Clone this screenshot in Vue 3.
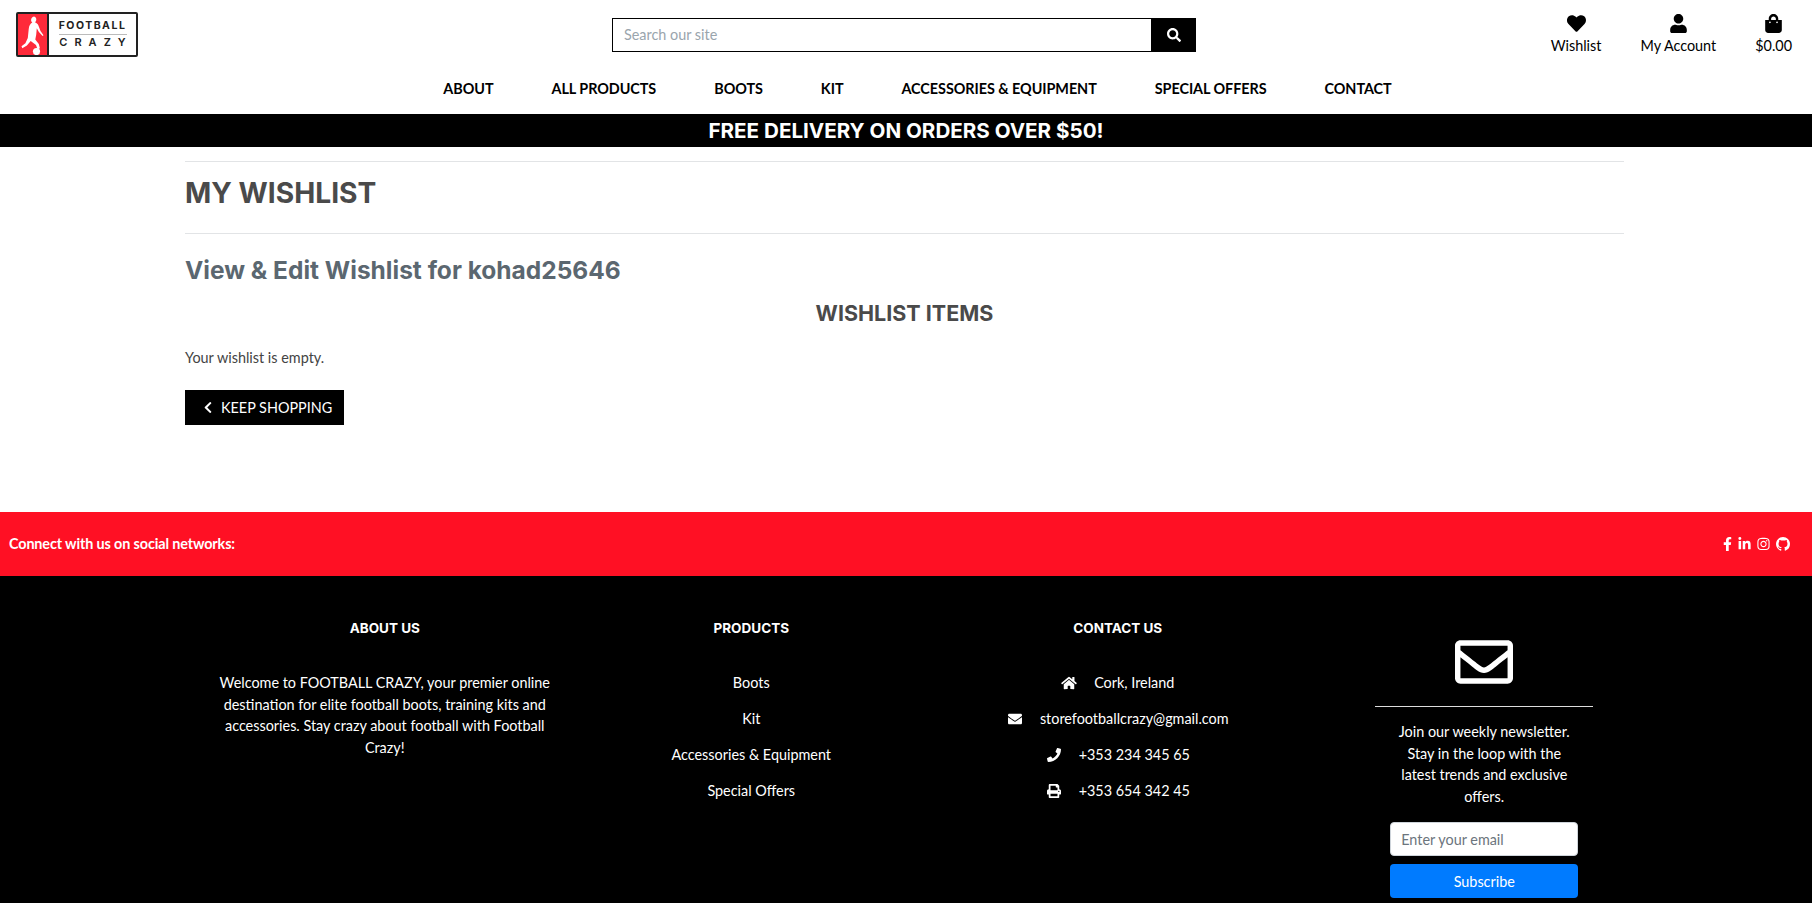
<template>
  <div class="page">
    <header class="site-header">
      <div class="top-row">
        <a class="logo" href="#">
          <span class="logo-mark">
            <svg viewBox="0 0 31 44" width="31" height="44">
              <path fill="#fff" d="M17.5 3.5c1.8 0 3 1.4 2.8 3.2-.1 1.2-.7 2.1-1.5 2.6 1.6.6 2.9 1.6 3.6 3.2l2.1 5.5 3 4.2-.9.7-3.7-3.9-2.1-3.7-.6 6.5-.9 4.8 3.5 4.4 1.1 4.3-2.3 1.2-1.6-4.4-5.3-4.2-3.8 4.6-4.6 2.7-.8-2 3.9-3 2.4-5.3.9-8.7c.3-3.3 1.6-5.6 3.6-6.6-.9-.7-1.3-1.8-1.2-2.9.2-1.8 1.4-3.2 3.4-3.2z"/>
              <circle cx="20.5" cy="38.5" r="3.6" fill="#fff"/>
            </svg>
          </span>
          <span class="logo-text">
            <span class="logo-top">FOOTBALL</span>
            <span class="logo-bottom">CRAZY</span>
          </span>
        </a>
        <form class="search" @submit.prevent>
          <input class="search-input" type="text" placeholder="Search our site" />
          <button class="search-btn" type="submit" aria-label="Search">
            <svg class="icon" viewBox="0 0 512 512" width="14" height="14"><path :d="paths.search" /></svg>
          </button>
        </form>
        <div class="account-links">
          <a v-for="link in accountLinks" :key="link.label" class="account-link" href="#">
            <svg class="icon" :viewBox="link.box" height="19" width="21"><path :d="link.d" /></svg>
            <span>{{ link.label }}</span>
          </a>
        </div>
      </div>
      <nav class="main-nav">
        <a v-for="item in navItems" :key="item" href="#">{{ item }}</a>
      </nav>
    </header>

    <div class="banner">FREE DELIVERY ON ORDERS OVER $50!</div>

    <main class="content">
      <hr class="rule" />
      <h1 class="page-title">MY WISHLIST</h1>
      <hr class="rule" />
      <h2 class="sub-title">View &amp; Edit Wishlist for kohad25646</h2>
      <h3 class="items-title">WISHLIST ITEMS</h3>
      <p class="empty-text">Your wishlist is empty.</p>
      <a class="keep-btn" href="#">
        <svg class="icon" viewBox="0 0 320 512" width="10" height="13"><path :d="paths.chevron" /></svg>
        <span>KEEP SHOPPING</span>
      </a>
    </main>

    <section class="social-bar">
      <span>Connect with us on social networks:</span>
      <div class="social-icons">
        <svg v-for="s in socials" :key="s.name" class="icon" :viewBox="s.box" :width="s.w" height="14"><path :d="s.d" /></svg>
      </div>
    </section>

    <footer class="site-footer">
      <div class="footer-col">
        <h4>ABOUT US</h4>
        <p class="about">Welcome to FOOTBALL CRAZY, your premier online destination for elite football boots, training kits and accessories. Stay crazy about football with Football Crazy!</p>
      </div>
      <div class="footer-col">
        <h4>PRODUCTS</h4>
        <ul>
          <li v-for="p in products" :key="p"><a href="#">{{ p }}</a></li>
        </ul>
      </div>
      <div class="footer-col">
        <h4>CONTACT US</h4>
        <ul>
          <li v-for="c in contacts" :key="c.text" class="contact-row">
            <svg class="icon" :viewBox="c.box" width="16" height="14"><path :d="c.d" /></svg>
            <span>{{ c.text }}</span>
          </li>
        </ul>
      </div>
      <div class="footer-col newsletter">
        <svg class="icon mail" viewBox="0 0 512 512" width="58" height="58"><path :d="paths.envelopeOutline" /></svg>
        <hr />
        <p>Join our weekly newsletter. Stay in the loop with the latest trends and exclusive offers.</p>
        <input type="email" placeholder="Enter your email" />
        <button type="button">Subscribe</button>
      </div>
    </footer>
  </div>
</template>

<script setup>
const paths = {
  search: 'M505 442.7L405.3 343c-4.5-4.5-10.6-7-17-7H372c27.6-35.3 44-79.7 44-128C416 93.1 322.9 0 208 0S0 93.1 0 208s93.1 208 208 208c48.3 0 92.7-16.4 128-44v16.3c0 6.4 2.5 12.5 7 17l99.7 99.7c9.4 9.4 24.6 9.4 33.9 0l28.3-28.3c9.4-9.4 9.4-24.6.1-34zM208 336c-70.7 0-128-57.2-128-128 0-70.7 57.2-128 128-128 70.7 0 128 57.2 128 128 0 70.7-57.2 128-128 128z',
  chevron: 'M34.52 239.03L228.87 44.69c9.37-9.37 24.57-9.37 33.94 0l22.67 22.67c9.36 9.36 9.37 24.52.04 33.9L131.49 256l154.02 154.75c9.34 9.38 9.32 24.54-.04 33.9l-22.67 22.67c-9.37 9.37-24.57 9.37-33.94 0L34.52 272.97c-9.37-9.37-9.37-24.57 0-33.94z',
  envelopeOutline: 'M464 64H48C21.49 64 0 85.49 0 112v288c0 26.51 21.49 48 48 48h416c26.51 0 48-21.49 48-48V112c0-26.51-21.49-48-48-48zm0 48v40.805c-22.422 18.259-58.168 46.651-134.587 106.49-16.841 13.247-50.201 45.072-73.413 44.701-23.208.375-56.579-31.459-73.413-44.701C106.18 199.465 70.425 171.067 48 152.805V112h416zM48 400V214.398c22.914 18.251 55.409 43.862 104.938 82.646 21.857 17.205 60.134 55.186 103.062 54.955 42.717.231 80.509-37.199 103.053-54.947 49.528-38.783 82.032-64.401 104.947-82.653V400H48z'
}

const accountLinks = [
  { label: 'Wishlist', box: '0 0 512 512', d: 'M462.3 62.6C407.5 15.9 326 24.3 275.7 76.2L256 96.5l-19.7-20.3C186.1 24.3 104.5 15.9 49.7 62.6c-62.8 53.6-66.1 149.8-9.9 207.9l193.5 199.8c12.5 12.9 32.8 12.9 45.3 0l193.5-199.8c56.3-58.1 53-154.3-9.8-207.9z' },
  { label: 'My Account', box: '0 0 448 512', d: 'M224 256c70.7 0 128-57.3 128-128S294.7 0 224 0 96 57.3 96 128s57.3 128 128 128zm89.6 32h-16.7c-22.2 10.2-46.9 16-72.9 16s-50.6-5.8-72.9-16h-16.7C60.2 288 0 348.2 0 422.4V464c0 26.5 21.5 48 48 48h352c26.5 0 48-21.5 48-48v-41.6c0-74.2-60.2-134.4-134.4-134.4z' },
  { label: '$0.00', box: '0 0 448 512', d: 'M352 160v-32C352 57.42 294.579 0 224 0 153.42 0 96 57.42 96 128v32H0v272c0 44.183 35.817 80 80 80h288c44.183 0 80-35.817 80-80V160h-96zm-192-32c0-35.29 28.71-64 64-64s64 28.71 64 64v32H160v-32zm160 120c-13.255 0-24-10.745-24-24s10.745-24 24-24 24 10.745 24 24-10.745 24-24 24zm-192 0c-13.255 0-24-10.745-24-24s10.745-24 24-24 24 10.745 24 24-10.745 24-24 24z' }
]

const navItems = ['ABOUT', 'ALL PRODUCTS', 'BOOTS', 'KIT', 'ACCESSORIES & EQUIPMENT', 'SPECIAL OFFERS', 'CONTACT']

const socials = [
  { name: 'facebook', box: '0 0 320 512', w: 9, d: 'M279.14 288l14.22-92.66h-88.91v-60.13c0-25.35 12.42-50.06 52.24-50.06h40.42V6.26S260.43 0 225.36 0c-73.22 0-121.08 44.38-121.08 124.72v70.62H22.89V288h81.39v224h100.17V288z' },
  { name: 'linkedin', box: '0 0 448 512', w: 13, d: 'M100.28 448H7.4V148.9h92.88zM53.79 108.1C24.09 108.1 0 83.5 0 53.8a53.79 53.79 0 0 1 107.58 0c0 29.7-24.1 54.3-53.79 54.3zM447.9 448h-92.68V302.4c0-34.7-.7-79.2-48.29-79.2-48.29 0-55.69 37.7-55.69 76.7V448h-92.78V148.9h89.08v40.8h1.3c12.4-23.5 42.69-48.3 87.88-48.3 94 0 111.28 61.9 111.28 142.3V448z' },
  { name: 'instagram', box: '0 0 448 512', w: 13, d: 'M224.1 141c-63.6 0-114.9 51.3-114.9 114.9s51.3 114.9 114.9 114.9S339 319.5 339 255.9 287.7 141 224.1 141zm0 189.6c-41.1 0-74.7-33.5-74.7-74.7s33.5-74.7 74.7-74.7 74.7 33.5 74.7 74.7-33.6 74.7-74.7 74.7zm146.4-194.3c0 14.9-12 26.8-26.8 26.8-14.9 0-26.8-12-26.8-26.8s12-26.8 26.8-26.8 26.8 12 26.8 26.8zm76.1 27.2c-1.7-35.9-9.9-67.7-36.2-93.9-26.2-26.2-58-34.4-93.9-36.2-37-2.1-147.9-2.1-184.9 0-35.8 1.7-67.6 9.9-93.9 36.1s-34.4 58-36.2 93.9c-2.1 37-2.1 147.9 0 184.9 1.7 35.9 9.9 67.7 36.2 93.9s58 34.4 93.9 36.2c37 2.1 147.9 2.1 184.9 0 35.9-1.7 67.7-9.9 93.9-36.2 26.2-26.2 34.4-58 36.2-93.9 2.1-37 2.1-147.8 0-184.8zM398.8 388c-7.8 19.6-22.9 34.7-42.6 42.6-29.5 11.7-99.5 9-132.1 9s-102.7 2.6-132.1-9c-19.6-7.8-34.7-22.9-42.6-42.6-11.7-29.5-9-99.5-9-132.1s-2.6-102.7 9-132.1c7.8-19.6 22.9-34.7 42.6-42.6 29.5-11.7 99.5-9 132.1-9s102.7-2.6 132.1 9c19.6 7.8 34.7 22.9 42.6 42.6 11.7 29.5 9 99.5 9 132.1s2.7 102.7-9 132.1z' },
  { name: 'github', box: '0 0 16 16', w: 14, d: 'M8 0C3.58 0 0 3.58 0 8c0 3.54 2.29 6.53 5.47 7.59.4.07.55-.17.55-.38 0-.19-.01-.82-.01-1.49-2.01.37-2.53-.49-2.69-.94-.09-.23-.48-.94-.82-1.13-.28-.15-.68-.52-.01-.53.63-.01 1.08.58 1.23.82.72 1.21 1.87.87 2.33.66.07-.52.28-.87.51-1.07-1.78-.2-3.64-.89-3.64-3.95 0-.87.31-1.59.82-2.15-.08-.2-.36-1.02.08-2.12 0 0 .67-.21 2.2.82.64-.18 1.32-.27 2-.27.68 0 1.36.09 2 .27 1.53-1.04 2.2-.82 2.2-.82.44 1.1.16 1.92.08 2.12.51.56.82 1.27.82 2.15 0 3.07-1.87 3.75-3.65 3.95.29.25.54.73.54 1.48 0 1.07-.01 1.93-.01 2.2 0 .21.15.46.55.38A8.013 8.013 0 0016 8c0-4.42-3.58-8-8-8z' }
]

const products = ['Boots', 'Kit', 'Accessories & Equipment', 'Special Offers']

const contacts = [
  { text: 'Cork, Ireland', box: '0 0 576 512', d: 'M280.37 148.26L96 300.11V464a16 16 0 0 0 16 16l112.06-.29a16 16 0 0 0 15.92-16V368a16 16 0 0 1 16-16h64a16 16 0 0 1 16 16v95.64a16 16 0 0 0 16 16.05L464 480a16 16 0 0 0 16-16V300L295.67 148.26a12.19 12.19 0 0 0-15.3 0zM571.6 251.47L488 182.56V44.05a12 12 0 0 0-12-12h-56a12 12 0 0 0-12 12v72.61L318.47 43a48 48 0 0 0-61 0L4.34 251.47a12 12 0 0 0-1.6 16.9l25.5 31A12 12 0 0 0 45.15 301l235.22-193.74a12.19 12.19 0 0 1 15.3 0L530.9 301a12 12 0 0 0 16.9-1.6l25.5-31a12 12 0 0 0-1.7-16.93z' },
  { text: 'storefootballcrazy@gmail.com', box: '0 0 512 512', d: 'M502.3 190.8c3.9-3.1 9.7-.2 9.7 4.7V400c0 26.5-21.5 48-48 48H48c-26.5 0-48-21.5-48-48V195.6c0-5 5.7-7.8 9.7-4.7 22.4 17.4 52.1 39.5 154.1 113.6 21.1 15.4 56.7 47.8 92.2 47.6 35.7.3 72-32.8 92.3-47.6 102-74.1 131.6-96.3 154-113.7zM256 320c23.2.4 56.6-29.2 73.4-41.4 132.7-96.3 142.8-104.7 173.4-128.7 5.8-4.5 9.2-11.5 9.2-18.9v-19c0-26.5-21.5-48-48-48H48C21.5 64 0 85.5 0 112v19c0 7.4 3.4 14.3 9.2 18.9 30.6 23.9 40.7 32.4 173.4 128.7 16.8 12.2 50.2 41.8 73.4 41.4z' },
  { text: '+353 234 345 65', box: '0 0 512 512', d: 'M493.4 24.6l-104-24c-11.3-2.6-22.9 3.3-27.5 13.9l-48 112c-4.2 9.8-1.4 21.3 6.9 28l60.6 49.6c-36 76.7-98.9 140.5-177.2 177.2l-49.6-60.6c-6.8-8.3-18.2-11.1-28-6.9l-112 48C3.9 366.5-2 378.1.6 389.4l24 104C27.1 504.2 36.7 512 48 512c256.1 0 464-207.5 464-464 0-11.2-7.7-20.9-18.6-23.4z' },
  { text: '+353 654 342 45', box: '0 0 512 512', d: 'M448 192V77.25c0-8.49-3.37-16.62-9.37-22.63L393.37 9.37c-6-6-14.14-9.37-22.63-9.37H96C78.33 0 64 14.33 64 32v160c-35.35 0-64 28.65-64 64v112c0 8.84 7.16 16 16 16h48v96c0 17.67 14.33 32 32 32h320c17.67 0 32-14.33 32-32v-96h48c8.84 0 16-7.16 16-16V256c0-35.35-28.65-64-64-64zm-64 256H128v-96h256v96zm0-224H128V64h192v48c0 8.84 7.16 16 16 16h48v96zm48 72c-13.25 0-24-10.75-24-24 0-13.26 10.75-24 24-24s24 10.74 24 24c0 13.25-10.75 24-24 24z' }
]
</script>

<style>
html, body {
  margin: 0;
  background: #fff;
  overflow: hidden;
}
</style>

<style scoped>
.page {
  height: 903px;
  overflow: hidden;
  font-family: Lato, "Open Sans", sans-serif;
  font-size: 14.4px;
  line-height: 1.5;
  color: #444;
}

a {
  color: inherit;
  text-decoration: none;
}

.icon {
  display: block;
  fill: currentColor;
  flex: none;
}

/* header */
.site-header {
  height: 114px;
  box-sizing: border-box;
  color: #000;
}

.top-row {
  display: grid;
  grid-template-columns: 612px 584px 1fr;
  height: 71px;
}

.logo {
  display: flex;
  width: 122px;
  height: 45px;
  margin: 12px 0 0 16px;
  box-sizing: border-box;
  border: 2px solid #222;
  border-radius: 2px;
}

.logo-mark {
  width: 29px;
  background: #ff2a3a;
  border-right: 2px solid #222;
  flex: none;
  overflow: hidden;
}

.logo-mark svg {
  display: block;
  margin: -1px 0 0 -2px;
}

.logo-text {
  flex: 1;
  display: flex;
  flex-direction: column;
  align-items: center;
  font-family: Inter, sans-serif;
  font-weight: 700;
  line-height: 1;
  margin-top: 7px;
  color: #222;
}

.logo-top {
  font-size: 10.5px;
  letter-spacing: 1.5px;
  width: 68px;
  white-space: nowrap;
  text-align: center;
  padding-bottom: 2px;
  border-bottom: 1px solid #bbb;
}

.logo-bottom {
  font-size: 11px;
  font-weight: 600;
  letter-spacing: 7px;
  margin-top: 2px;
  margin-right: -7px;
}

.search {
  display: flex;
  height: 34px;
  margin-top: 18px;
}

.search-input {
  flex: 1;
  min-width: 0;
  box-sizing: border-box;
  border: 1px solid #000;
  border-right: 0;
  padding: 0 11px;
  font: inherit;
  font-size: 14.4px;
  outline: none;
}

.search-input::placeholder {
  color: #9aa5ad;
}

.search-btn {
  width: 45px;
  border: 0;
  padding: 0;
  background: #000;
  color: #fff;
  display: flex;
  align-items: center;
  justify-content: center;
}

.account-links {
  display: flex;
  justify-content: flex-end;
  gap: 39px;
  padding: 14px 20px 0 0;
}

.account-link {
  display: flex;
  flex-direction: column;
  align-items: center;
  gap: 2px;
  height: 42px;
}

.main-nav {
  display: flex;
  justify-content: center;
  gap: 58px;
  padding-left: 23px;
  font-weight: 700;
  font-size: 14.4px;
  letter-spacing: -0.05px;
  line-height: 36px;
}

.banner {
  height: 33px;
  background: #000;
  color: #fff;
  text-align: center;
  font-family: Inter, sans-serif;
  font-weight: 700;
  font-size: 20.6px;
  line-height: 33px;
}

/* main */
.content {
  height: 365px;
  box-sizing: border-box;
  padding: 14px 188px 0 185px;
}

.rule {
  margin: 0;
  border: 0;
  border-top: 1px solid #e2e4e6;
}

.page-title {
  margin: 0;
  height: 71px;
  font-family: Inter, sans-serif;
  font-weight: 700;
  font-size: 28.2px;
  line-height: 63px;
  color: #4a4a4a;
}

.sub-title {
  margin: 21px 0 0;
  font-family: Inter, sans-serif;
  font-weight: 700;
  font-size: 24.5px;
  line-height: 31px;
  color: #5b6770;
}

.items-title {
  margin: 12px 0 0;
  text-align: center;
  font-family: Inter, sans-serif;
  font-weight: 700;
  font-size: 21.5px;
  line-height: 30px;
  color: #4a4a4a;
}

.empty-text {
  margin: 19px 0 0;
  line-height: 22px;
}

.keep-btn {
  display: flex;
  align-items: center;
  gap: 8px;
  width: 159px;
  height: 35px;
  box-sizing: border-box;
  margin-top: 21px;
  padding-left: 18px;
  background: #000;
  color: #fff;
}

/* social bar */
.social-bar {
  height: 64px;
  background: #ff1024;
  color: #fff;
  display: flex;
  align-items: center;
  justify-content: space-between;
  padding: 0 22px 0 9px;
  font-weight: 700;
  letter-spacing: -0.13px;
}

.social-icons {
  display: flex;
  align-items: center;
  gap: 6px;
}

/* footer */
.site-footer {
  height: 327px;
  box-sizing: border-box;
  background: #000;
  color: #fff;
  display: grid;
  grid-template-columns: repeat(4, 366.5px);
  padding-left: 201.5px;
  text-align: center;
}

.footer-col h4 {
  margin: 41px 0 0;
  font-family: Inter, sans-serif;
  font-weight: 700;
  font-size: 13.5px;
  line-height: 22px;
}

.footer-col ul {
  list-style: none;
  margin: 33px 0 0;
  padding: 0;
  display: flex;
  flex-direction: column;
  gap: 14.4px;
}

.about {
  width: 340px;
  margin: 33px auto 0;
}

.contact-row {
  display: flex;
  justify-content: center;
  align-items: center;
  gap: 17px;
}

.newsletter {
  display: flex;
  flex-direction: column;
  align-items: center;
}

.mail {
  margin-top: 57px;
}

.newsletter hr {
  width: 218px;
  margin: 15px 0 0;
  border: 0;
  border-top: 1px solid #ddd;
}

.newsletter p {
  width: 188px;
  margin: 14px 0 0;
}

.newsletter input,
.newsletter button {
  width: 188px;
  height: 34px;
  box-sizing: border-box;
  border-radius: 4px;
  font: inherit;
}

.newsletter input {
  margin-top: 15px;
  border: 1px solid #ced4da;
  padding: 0 10px;
  background: #fff;
  color: #495057;
  outline: none;
}

.newsletter input::placeholder {
  color: #6c757d;
}

.newsletter button {
  margin-top: 8px;
  border: 0;
  background: #007bff;
  color: #fff;
}
</style>
